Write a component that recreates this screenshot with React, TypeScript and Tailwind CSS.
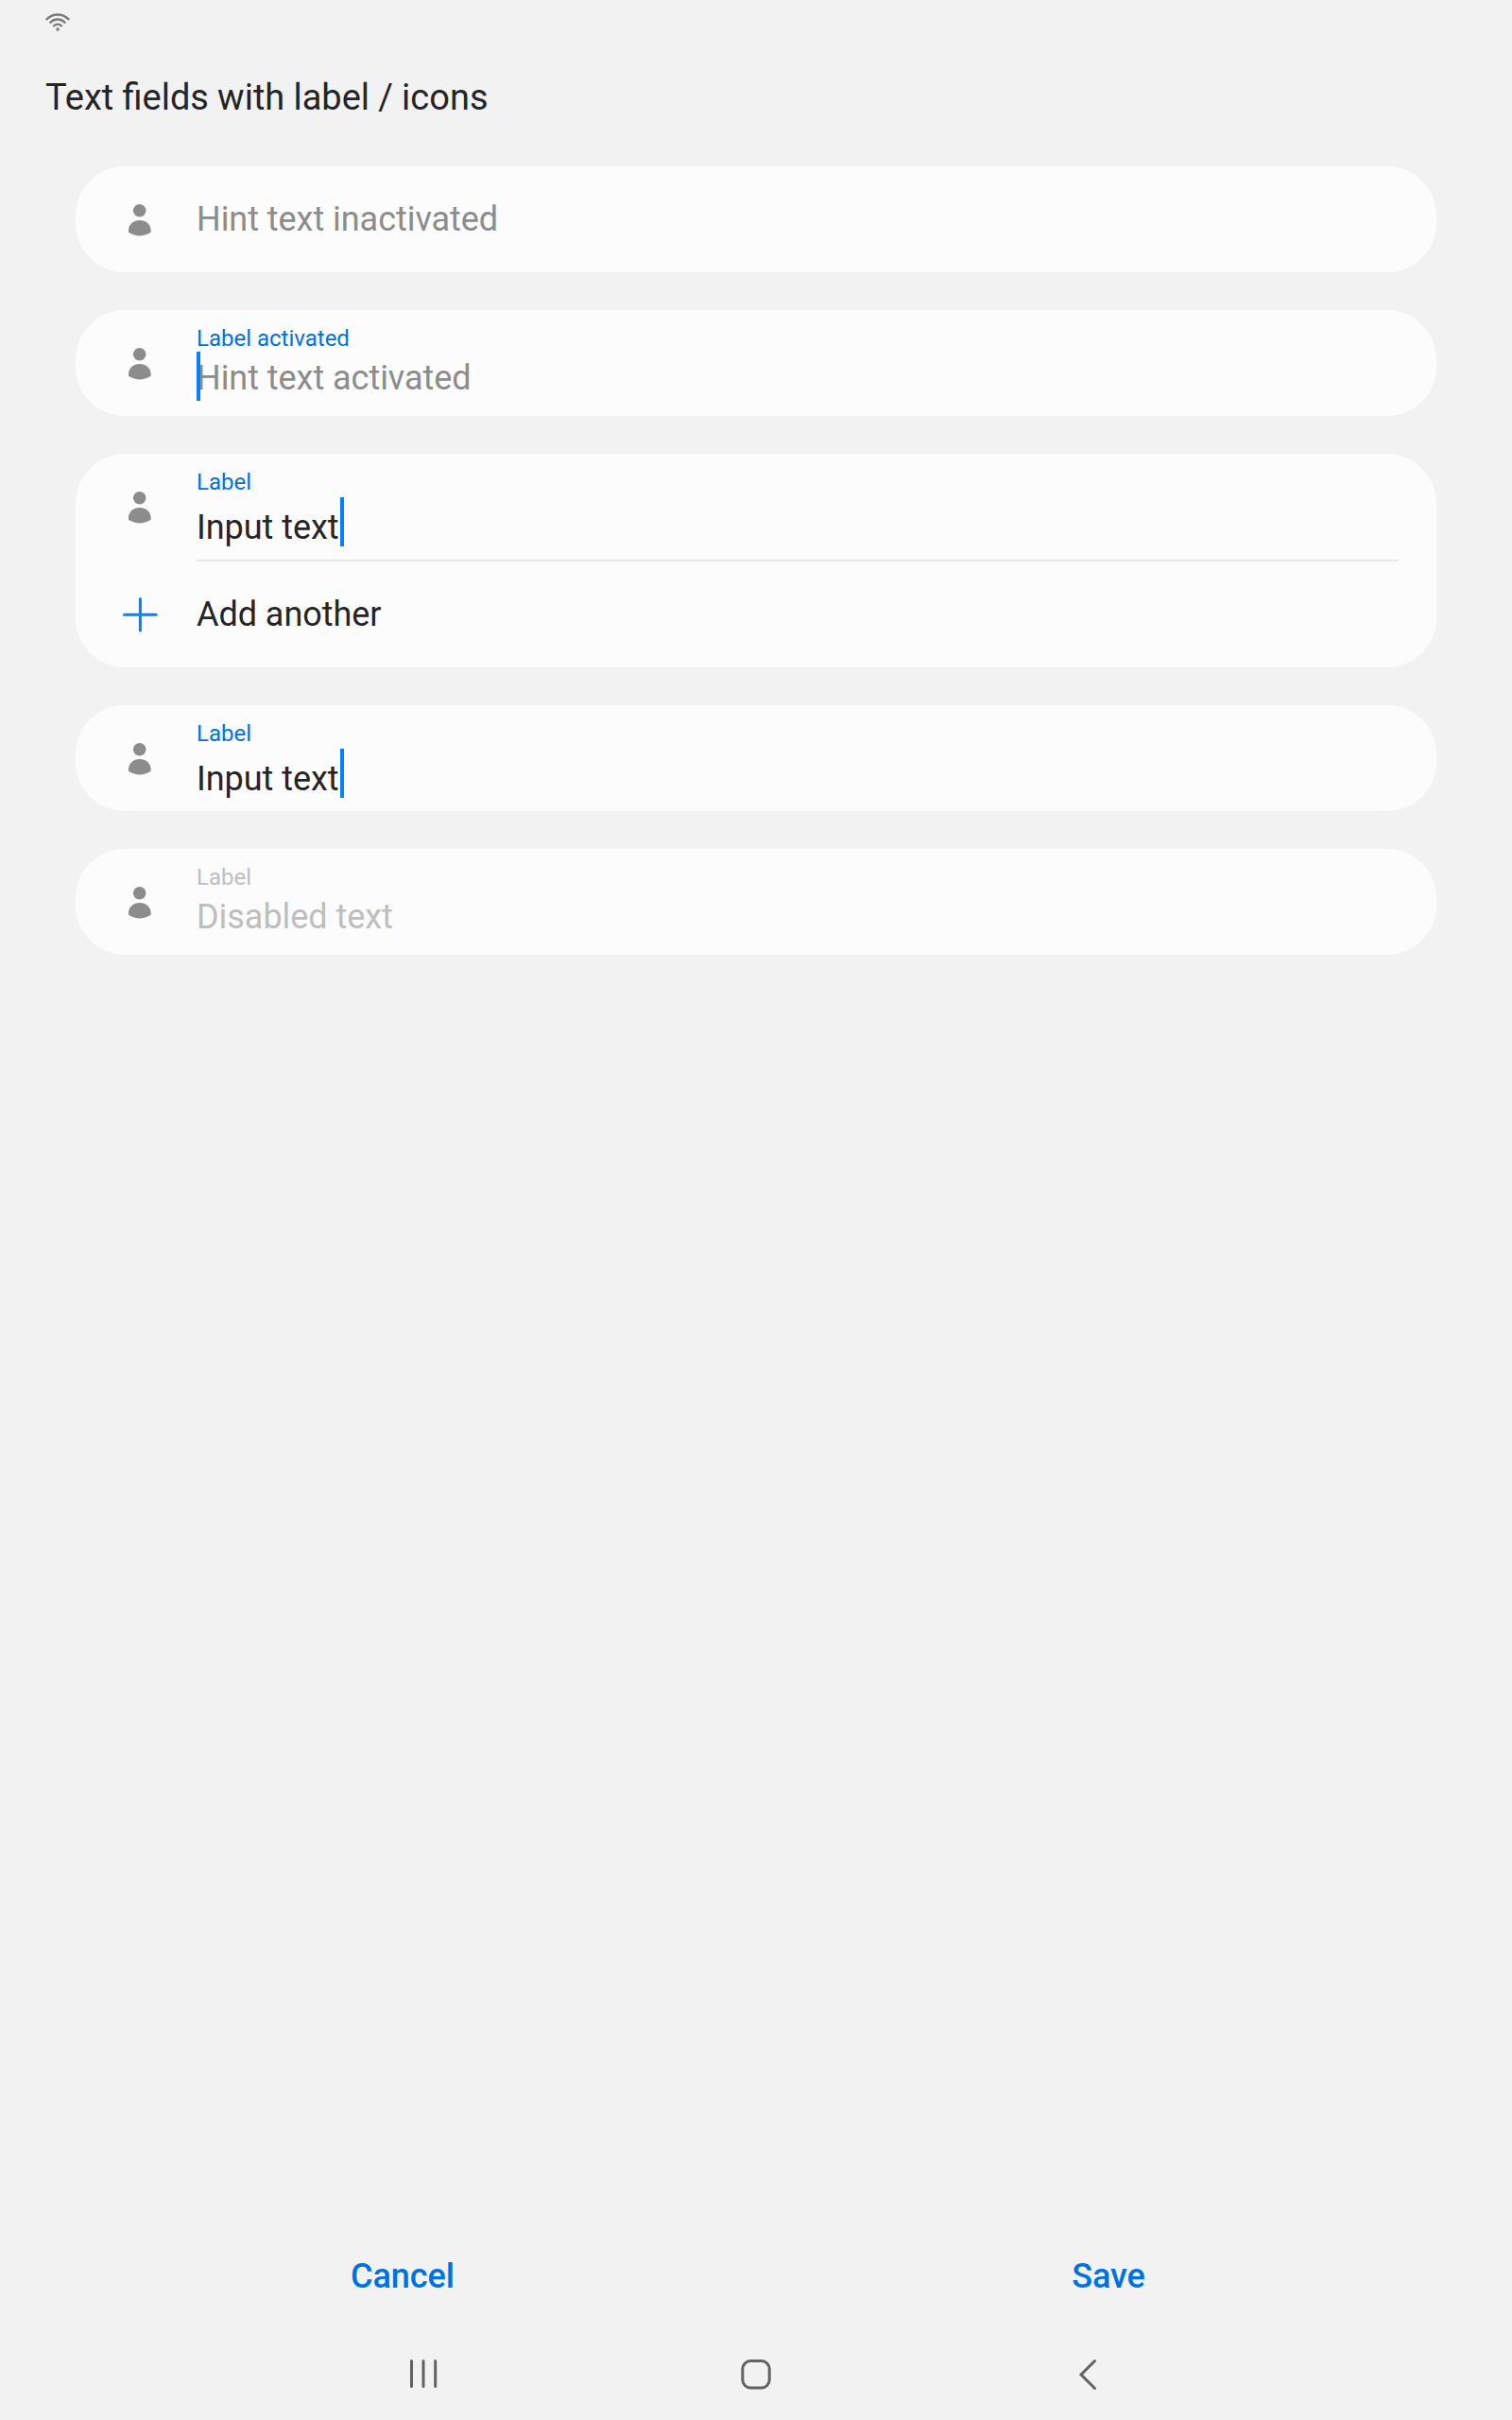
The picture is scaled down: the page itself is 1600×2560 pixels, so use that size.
import type { ReactNode } from "react";

function PersonIcon() {
  return (
    <svg className="h-9 w-6 shrink-0" viewBox="0 0 24 36" fill="#8c8c8c">
      <circle cx="11.7" cy="8.7" r="6.8" />
      <path d="M0 30C0 23.6 5.2 19 11.8 19S23.7 23.6 23.7 30V31.3C23.7 31.8 23.5 32 23 32.3C16.2 36.4 7.4 36.4.7 32.3C.2 32 0 31.8 0 31.3Z" />
    </svg>
  );
}

type RowProps = {
  label: string;
  labelClass: string;
  children: ReactNode;
};

function LabelRow({ label, labelClass, children }: RowProps) {
  return (
    <div className="flex h-28 pl-14">
      <div className="pt-[38px]">
        <PersonIcon />
      </div>
      <div className="ml-12 pt-4">
        <div className={labelClass}>{label}</div>
        {children}
      </div>
    </div>
  );
}

function InputValue() {
  return (
    <div className="mt-[13px] flex w-[156px] justify-between text-[36px] leading-[42px] tracking-[-0.04px] text-[#252525]">
      Input text
      <span className="-mt-[11px] h-13 w-1 shrink-0 bg-[#0381fe]" />
    </div>
  );
}

const card = "rounded-[52px] bg-[#fcfcfc]";
const activeLabel = "text-[24px] leading-7 text-[#0072de]";

export default function App() {
  return (
    <div className="flex h-[2560px] w-[1600px] flex-col bg-[#f2f2f2] font-['Roboto',sans-serif] whitespace-nowrap">
      <div className="h-12 pt-[13px] pl-12">
        <svg className="h-5 w-[26px]" viewBox="0 0 26 20" fill="none" stroke="#7c7c7c" strokeWidth="2.4" strokeLinecap="butt">
          <path d="M.8 8C7.6.6 18.4.6 25.2 8" />
          <path d="M4.7 11.5C9.3 6.2 16.7 6.2 21.3 11.5" />
          <path d="M8.3 15C10.8 11.8 15.2 11.8 17.7 15" />
          <circle cx="13" cy="18.1" r="1.8" fill="#7c7c7c" stroke="none" />
        </svg>
      </div>
      <h1 className="mt-8 h-24 pl-12 text-[38px] leading-[46px] [word-spacing:-0.25px] text-[#252525]">Text fields with label / icons</h1>

      <main className="mx-20 flex flex-col gap-10">
        <section className={card}>
          <div className="flex h-28 pl-14">
            <div className="pt-[38px]">
              <PersonIcon />
            </div>
            <div className="mt-[35px] ml-12 text-[36px] leading-[42px] tracking-[-0.04px] text-[#8c8c8c]">Hint text inactivated</div>
          </div>
        </section>

        <section className={card}>
          <LabelRow label="Label activated" labelClass={activeLabel}>
            <div className="relative mt-[7px] text-[36px] leading-[42px] tracking-[-0.04px] text-[#8c8c8c]">
              Hint text activated
              <span className="absolute -top-[7px] left-0 h-13 w-1 bg-[#0381fe]" />
            </div>
          </LabelRow>
        </section>

        <section className={card}>
          <LabelRow label="Label" labelClass={activeLabel}>
            <InputValue />
          </LabelRow>
          <div className="mr-10 ml-32 h-0.5 border-t border-[#e3e3e3] bg-[#ededed]" />
          <div className="flex h-28 items-center pl-12">
            <svg className="h-10 w-10" viewBox="0 0 40 40" stroke="#0381fe" strokeWidth="3" strokeLinecap="round">
              <path d="M3.5 20.2H37.2M20.4 3.4V37" />
            </svg>
            <span className="ml-10 text-[36px] leading-[42px] tracking-[-0.04px] text-[#252525]">Add another</span>
          </div>
        </section>

        <section className={card}>
          <LabelRow label="Label" labelClass={activeLabel}>
            <InputValue />
          </LabelRow>
        </section>

        <section className={card}>
          <LabelRow label="Label" labelClass="text-[24px] leading-7 text-[#bebebe]">
            <div className="mt-[7px] text-[36px] leading-[42px] tracking-[-0.04px] text-[#bebebe]">Disabled text</div>
          </LabelRow>
        </section>
      </main>

      <footer className="mt-auto">
        <div className="flex h-[77px] text-[36px] leading-[42px] font-medium tracking-[-0.04px] text-[#0072de]">
          <div className="ml-[326px] w-[200px] text-center">Cancel</div>
          <div className="ml-[547px] w-[200px] text-center">Save</div>
        </div>
        <nav className="flex h-24 items-center justify-center gap-[312px]">
          <svg className="h-10 w-10" viewBox="0 0 40 40" fill="none" stroke="#636363" strokeWidth="3" strokeLinecap="round">
            <path d="M7.5 5.5V32.5M20 5.5V32.5M32.7 5.5V32.5" />
          </svg>
          <svg className="h-10 w-10" viewBox="0 0 40 40" fill="none" stroke="#636363" strokeWidth="3">
            <rect x="5.8" y="5.6" width="28.4" height="28.4" rx="8.5" />
          </svg>
          <svg className="h-10 w-10" viewBox="0 0 40 40" fill="none" stroke="#636363" strokeWidth="3" strokeLinecap="round">
            <path d="M26.5 5.5L12 20L26.5 34.5" />
          </svg>
        </nav>
      </footer>
    </div>
  );
}
